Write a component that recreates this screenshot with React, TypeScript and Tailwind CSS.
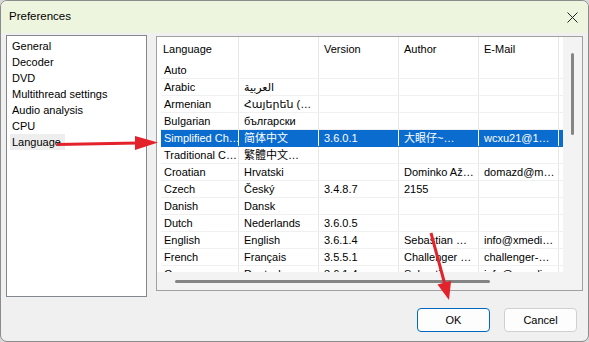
const rows: string[][] = [
  ["Auto", "", "", "", ""],
  ["Arabic", "العربية", "", "", ""],
  ["Armenian", "Հայերեն (…", "", "", ""],
  ["Bulgarian", "български", "", "", ""],
  ["Simplified Ch…", "简体中文", "3.6.0.1", "大眼仔~…", "wcxu21@1…"],
  ["Traditional C…", "繁體中文…", "", "", ""],
  ["Croatian", "Hrvatski", "", "Dominko Až…", "domazd@m…"],
  ["Czech", "Český", "3.4.8.7", "2155", ""],
  ["Danish", "Dansk", "", "", ""],
  ["Dutch", "Nederlands", "3.6.0.5", "", ""],
  ["English", "English", "3.6.1.4", "Sebastian …", "info@xmedi…"],
  ["French", "Français", "3.5.5.1", "Challenger …", "challenger-…"],
  ["German", "Deutsch", "3.6.1.4", "Sebastian …", "info@xmedi…"],
];

const pages = ["General", "Decoder", "DVD", "Multithread settings", "Audio analysis", "CPU"];

function Row({ cells, selected }: { cells: string[]; selected?: boolean }) {
  const line = selected ? "border-white" : "border-[#e6e6e6]";
  return (
    <div
      className={`flex h-[17px] items-center border-b ${
        selected ? "bg-[#0a6ccf] text-white border-[#0a6ccf]" : "border-[#f0f0f0]"
      }`}
    >
      <div className={`w-[78px] h-full flex items-center pl-[3px] border-r ${line} overflow-hidden whitespace-nowrap`}>
        {cells[0]}
      </div>
      {cells.slice(1).map((c, i) => (
        <div
          key={i}
          className={`w-[80px] h-full flex items-center pl-[5px] border-r ${line} overflow-hidden whitespace-nowrap`}
        >
          {c}
        </div>
      ))}
      <div className="flex-1" />
    </div>
  );
}

export default function App() {
  return (
    <div className="relative w-[589px] h-[342px] bg-[#d8d8d8] font-['Liberation_Sans','Noto_Sans_CJK_SC','DejaVu_Sans',sans-serif] text-[11px] text-black">
      <div className="w-full h-full flex flex-col rounded-[7px] border border-[#8c8c8c] overflow-hidden bg-[#f0f0f0]">
        {/* title bar */}
        <div className="h-[32px] flex items-center justify-between bg-[#eef5df] pl-[8px] pr-[10px]">
          <span className="text-[11.5px]">Preferences</span>
          <svg width="11" height="11" viewBox="0 0 11 11" className="mr-[0px]">
            <path d="M0.5 0.5 L10.5 10.5 M10.5 0.5 L0.5 10.5" stroke="#222" strokeWidth="1" />
          </svg>
        </div>

        <div className="flex-1 flex flex-col pl-[5px] pt-[2px]">
          <div className="flex gap-[9px]">
            {/* page list */}
            <div className="w-[141px] h-[262px] border border-[#828790] bg-white pt-[2px] pl-[5px]">
              {pages.map((p) => (
                <div key={p} className="h-[16px] flex items-center">
                  {p}
                </div>
              ))}
              <div className="h-[16px] flex items-center">
                <span className="bg-[#eeeeee] -ml-[2px] pl-[2px] pr-[4px] leading-[16px]">Language</span>
              </div>
            </div>

            {/* language table */}
            <div className="w-[427px] h-[255px] mt-[1px] border border-[#a0a0a0] flex flex-col">
              <div className="flex h-[235px]">
                <div className="w-[406px] h-full bg-white overflow-hidden pl-[4px]">
                  <div className="flex h-[25px] items-center">
                    <div className="w-[78px] h-full flex items-center pl-[2px] border-r border-[#e6e6e6]">Language</div>
                    <div className="w-[80px] h-full border-r border-[#e6e6e6]" />
                    <div className="w-[80px] h-full flex items-center pl-[5px] border-r border-[#e6e6e6]">Version</div>
                    <div className="w-[80px] h-full flex items-center pl-[5px] border-r border-[#e6e6e6]">Author</div>
                    <div className="w-[80px] h-full flex items-center pl-[5px] border-r border-[#e6e6e6]">E-Mail</div>
                    <div className="flex-1" />
                  </div>
                  {rows.map((r, i) => (
                    <Row key={i} cells={r} selected={i === 4} />
                  ))}
                </div>
                <div className="flex-1 bg-[#f3f3f3] flex justify-center pt-[16px]">
                  <div className="w-[3px] h-[82px] rounded-full bg-[#858585]" />
                </div>
              </div>
              <div className="flex-1 bg-[#f3f3f3] flex items-center pl-[18px]">
                <div className="w-[315px] h-[3px] rounded-full bg-[#858585]" />
              </div>
            </div>
          </div>

          {/* buttons */}
          <div className="flex justify-end gap-[14px] pr-[11px] mt-[11px]">
            <button className="w-[73px] h-[24px] rounded-[4px] border border-[#0067c0] bg-[#fdfdfd] text-[11px]">OK</button>
            <button className="w-[73px] h-[24px] rounded-[4px] border border-[#d0d0d0] bg-[#fdfdfd] text-[11px]">Cancel</button>
          </div>
        </div>
      </div>

      {/* red annotation arrows */}
      <svg className="absolute inset-0 pointer-events-none" width="589" height="342" viewBox="0 0 589 342">
        <line x1="57" y1="144.5" x2="138" y2="143" stroke="#e3222b" strokeWidth="3" />
        <polygon points="135,136 158,142.5 135,150" fill="#e3222b" />
        <line x1="431" y1="233" x2="444.5" y2="283" stroke="#e3222b" strokeWidth="3" />
        <polygon points="437.5,284.5 449,300 451.1,280.8" fill="#e3222b" />
      </svg>
    </div>
  );
}
